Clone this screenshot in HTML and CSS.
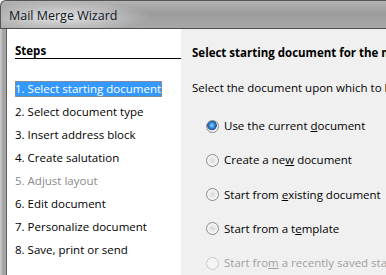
FILE: index.html
```html
<!DOCTYPE html>
<html>
<head>
  <title>Mail Merge Wizard</title>
  <link rel="stylesheet" href="styles.css">
</head>
<body>
  <div class="window">
    <div class="titlebar"><span class="title">Mail Merge Wizard</span></div>
    <div class="frame">
      <div class="steps">
        <div class="steps-head">Steps</div>
        <ul class="step-list">
          <li><span class="step current">1. Select starting document</span></li>
          <li><span class="step">2. Select document type</span></li>
          <li><span class="step">3. Insert address block</span></li>
          <li><span class="step">4. Create salutation</span></li>
          <li><span class="step disabled">5. Adjust layout</span></li>
          <li><span class="step">6. Edit document</span></li>
          <li><span class="step">7. Personalize document</span></li>
          <li><span class="step">8. Save, print or send</span></li>
        </ul>
      </div>
      <div class="page">
        <div class="page-head">Select starting document for the mail merge</div>
        <p class="intro">Select the document upon which to base the mail merge document</p>
        <div class="options">
          <label class="option"><span class="radio checked"></span><span>Use the current <u>d</u>ocument</span></label>
          <label class="option"><span class="radio"></span><span>Create a ne<u>w</u> document</span></label>
          <label class="option"><span class="radio"></span><span>Start from <u>e</u>xisting document</span></label>
          <label class="option"><span class="radio"></span><span>Start from a t<u>e</u>mplate</span></label>
          <label class="option off"><span class="radio"></span><span>Start fro<u>m</u> a recently saved starting document</span></label>
        </div>
      </div>
    </div>
  </div>
</body>
</html>
```

FILE: styles.css
```css
body { margin: 0; background: #f0f0f0; font-family: "Open Sans", "Noto Sans", Arial, sans-serif; font-size: 11.5px; color: #000; overflow: hidden; }
.window { width: 386px; height: 275px; display: flex; flex-direction: column; overflow: hidden; }
.titlebar { flex: none; height: 29px; border-bottom: 1px solid #4e4e4e; border-top-left-radius: 6px; border-top: 1px solid #555; border-left: 1px solid #555;
  background: radial-gradient(ellipse 90px 16px at 60px 16px, rgba(235,235,235,0.9), rgba(235,235,235,0) 100%),
    linear-gradient(180deg, #b4b4b4 0%, #9c9c9c 45%, #a8a8a8 100%);
  display: flex; align-items: center; padding-left: 8px; box-sizing: border-box; }
.title { color: #101828; font-size: 12.5px; padding-top: 2px; }
.frame { flex: 1; display: flex; border-left: 2px solid #c4c4c4; min-height: 0; }
.frame::before { content: ""; width: 4px; background: #a4a4a4; border-right: 1px solid #5e5e5e; flex: none; }
.steps { width: 174px; background: #fff; padding: 15px 0 0 8px; box-sizing: border-box; }
.steps-head { font-weight: bold; border-bottom: 1px solid #000; line-height: 14px; }
.step-list { list-style: none; margin: 22px 0 0 0; padding: 0; }
.step-list li { height: 23px; line-height: 16px; }
.step { display: inline-block; padding: 0 1px 0 0; white-space: nowrap; }
.step.current { background: #3399ff; color: #fff; outline: 1px dotted #d08040; outline-offset: -1px; }
.step.disabled { color: #8a8a8a; }
.page { flex: 1; padding: 16px 0 0 11px; white-space: nowrap; overflow: hidden; }
.page-head { font-weight: bold; line-height: 15px; }
.intro { margin: 20px 0 0 0; line-height: 16px; }
.options { margin-top: 13px; padding-left: 14px; }
.option { display: flex; align-items: center; height: 34.25px; line-height: 16px; }
.radio { width: 11px; height: 11px; border-radius: 50%; border: 1px solid #8a8a8a; margin-right: 5px; flex: none;
  background: radial-gradient(circle at 50% 50%, #d8d8d8 0%, #f4f4f4 60%, #ffffff 100%); }
.radio.checked { background: radial-gradient(circle at 45% 40%, #8fd0ff 0%, #2a7fd0 35%, #1b4f8a 50%, #f4f4f4 58%, #ffffff 100%); }
.option.off { color: #a0a0a0; }
.option.off .radio { border-color: #c8c8c8; background: #f4f4f4; }
```
